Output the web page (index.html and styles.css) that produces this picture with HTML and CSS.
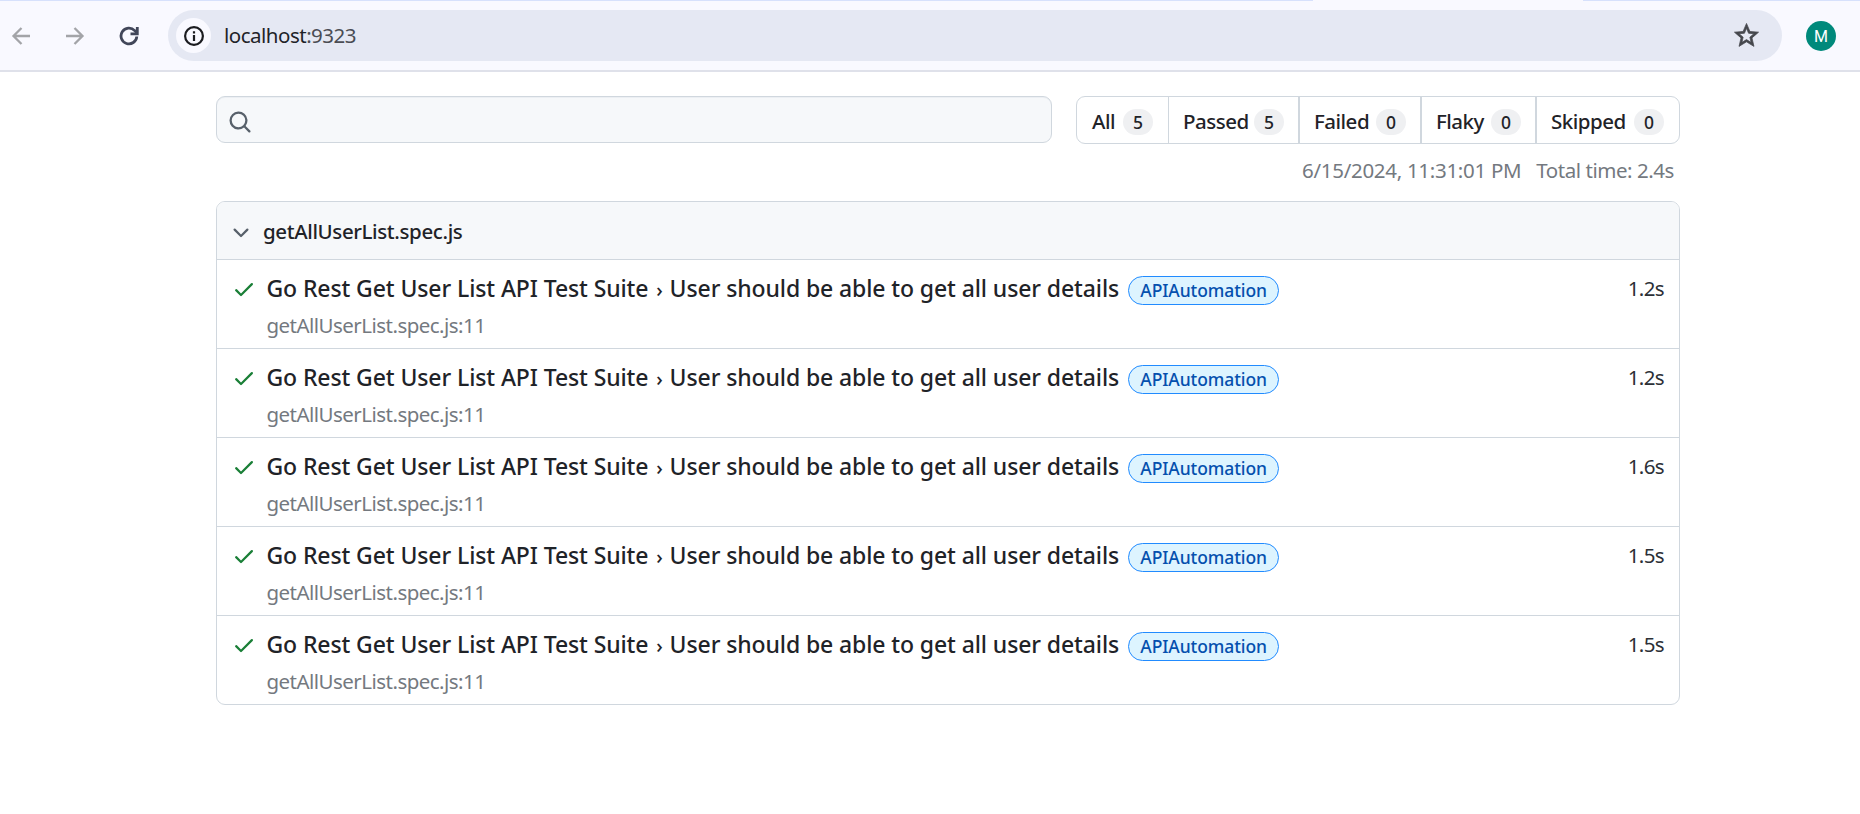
FILE: index.html
```html
<!DOCTYPE html>
<html lang="en">
<head>
<meta charset="utf-8">
<title>Playwright Test Report</title>
<link rel="stylesheet" href="styles.css">
</head>
<body>
<header class="toolbar">
  <svg class="nav back" viewBox="0 0 20 20"><path d="M19 10H3M10.500 2L2.500 10l8 8"/></svg>
  <svg class="nav forward" viewBox="0 0 20 20"><path d="M1 10h16M9.500 2l8 8-8 8"/></svg>
  <svg class="nav reload" viewBox="0 0 20 20"><path d="M17.800 10.500A7.900 7.900 0 1 1 15.700 4.600L17.600 6.500"/><path d="M18.300 1v6.800H11.500"/></svg>
  <div class="omnibox">
    <span class="site"><svg viewBox="0 0 20 20"><circle cx="10" cy="10" r="8.900"/><path d="M10 9v6M10 5.200v2.200"/></svg></span>
    <span class="url">localhost<span class="port">:9323</span></span>
    <svg class="star" viewBox="0 0 24 24"><path d="M22 9.240l-7.190-.62L12 2 9.190 8.630 2 9.240l5.460 4.730L5.820 21 12 17.270 18.180 21l-1.630-7.030L22 9.240zM12 15.400l-3.760 2.270 1-4.280-3.320-2.880 4.380-.38L12 6.100l1.710 4.040 4.380.38-3.320 2.880 1 4.280L12 15.400z"/></svg>
  </div>
  <span class="avatar">M</span>
</header>
<main class="report">
  <div class="filters">
    <div class="search"><svg viewBox="0 0 16 16"><path d="M10.680 11.740a6 6 0 0 1-7.922-8.982 6 6 0 0 1 8.982 7.922l3.040 3.040a.749.749 0 0 1-.326 1.275.749.749 0 0 1-.734-.215ZM11.500 7a4.499 4.499 0 1 0-8.997 0A4.499 4.499 0 0 0 11.500 7Z"/></svg></div>
    <nav class="tabs">
      <a class="tab all"><span class="name">All</span><span class="count">5</span></a>
      <a class="tab passed"><span class="name">Passed</span><span class="count">5</span></a>
      <a class="tab failed"><span class="name">Failed</span><span class="count">0</span></a>
      <a class="tab flaky"><span class="name">Flaky</span><span class="count">0</span></a>
      <a class="tab skipped"><span class="name">Skipped</span><span class="count">0</span></a>
    </nav>
  </div>
  <div class="meta"><span class="date">6/15/2024, 11:31:01 PM</span><span class="total">Total time: 2.4s</span></div>
  <section class="card">
    <div class="card-head"><svg viewBox="0 0 16 16"><path d="M12.780 5.220a.749.749 0 0 1 0 1.060l-4.250 4.250a.749.749 0 0 1-1.060 0L3.220 6.280a.749.749 0 1 1 1.060-1.060L8 8.939l3.720-3.719a.749.749 0 0 1 1.060 0Z"/></svg><span class="file">getAllUserList.spec.js</span></div>
    <div class="row"><svg class="check" viewBox="0 0 16 16"><path d="M13.780 4.220a.75.75 0 0 1 0 1.060l-7.250 7.250a.75.75 0 0 1-1.060 0L2.220 9.280a.751.751 0 0 1 1.060-1.060L6 10.940l6.720-6.720a.75.75 0 0 1 1.060 0Z"/></svg><div class="info"><div class="line"><span class="title">Go Rest Get User List API Test Suite <span class="sep">›</span> User should be able to get all user details</span><span class="label">APIAutomation</span></div><div class="path">getAllUserList.spec.js:11</div></div><span class="time">1.2s</span></div>
    <div class="row"><svg class="check" viewBox="0 0 16 16"><path d="M13.780 4.220a.75.75 0 0 1 0 1.060l-7.250 7.250a.75.75 0 0 1-1.060 0L2.220 9.280a.751.751 0 0 1 1.060-1.060L6 10.940l6.720-6.720a.75.75 0 0 1 1.060 0Z"/></svg><div class="info"><div class="line"><span class="title">Go Rest Get User List API Test Suite <span class="sep">›</span> User should be able to get all user details</span><span class="label">APIAutomation</span></div><div class="path">getAllUserList.spec.js:11</div></div><span class="time">1.2s</span></div>
    <div class="row"><svg class="check" viewBox="0 0 16 16"><path d="M13.780 4.220a.75.75 0 0 1 0 1.060l-7.250 7.250a.75.75 0 0 1-1.060 0L2.220 9.280a.751.751 0 0 1 1.060-1.060L6 10.940l6.720-6.720a.75.75 0 0 1 1.060 0Z"/></svg><div class="info"><div class="line"><span class="title">Go Rest Get User List API Test Suite <span class="sep">›</span> User should be able to get all user details</span><span class="label">APIAutomation</span></div><div class="path">getAllUserList.spec.js:11</div></div><span class="time">1.6s</span></div>
    <div class="row"><svg class="check" viewBox="0 0 16 16"><path d="M13.780 4.220a.75.75 0 0 1 0 1.060l-7.250 7.250a.75.75 0 0 1-1.060 0L2.220 9.280a.751.751 0 0 1 1.060-1.060L6 10.940l6.720-6.720a.75.75 0 0 1 1.060 0Z"/></svg><div class="info"><div class="line"><span class="title">Go Rest Get User List API Test Suite <span class="sep">›</span> User should be able to get all user details</span><span class="label">APIAutomation</span></div><div class="path">getAllUserList.spec.js:11</div></div><span class="time">1.5s</span></div>
    <div class="row"><svg class="check" viewBox="0 0 16 16"><path d="M13.780 4.220a.75.75 0 0 1 0 1.060l-7.250 7.250a.75.75 0 0 1-1.060 0L2.220 9.280a.751.751 0 0 1 1.060-1.060L6 10.940l6.720-6.720a.75.75 0 0 1 1.060 0Z"/></svg><div class="info"><div class="line"><span class="title">Go Rest Get User List API Test Suite <span class="sep">›</span> User should be able to get all user details</span><span class="label">APIAutomation</span></div><div class="path">getAllUserList.spec.js:11</div></div><span class="time">1.5s</span></div>
  </section>
</main>
</body>
</html>
```
FILE: styles.css
```css
* { box-sizing: border-box; }
body { margin: 0; background: #fff; color: #1f2328; font: 20.5px/30px "Noto Sans", "Open Sans", sans-serif; white-space: nowrap; overflow: hidden; }
svg { display: block; flex: none; }

/* The strip above the toolbar is interrupted under the active tab. */
.toolbar { height: 72px; display: flex; align-items: center; background: linear-gradient(90deg, #d7e1fc 1313px, #f9f9ff 1313px 1583px, #d7e1fc 1583px) 0 0 / 100% 1px no-repeat #f9f9ff; border-bottom: 2px solid #dfe1ea; padding: 1px 0 0 11px; }
.nav { width: 20px; height: 20px; fill: none; stroke: #a3a4a8; stroke-width: 2.3; }
.forward { margin-left: 34px; }
.reload { margin-left: 34px; stroke: #414659; stroke-width: 2.8; }
.omnibox { width: 1614px; height: 51px; margin-left: 29px; border-radius: 26px; background: #e5e8f3; display: flex; align-items: center; padding: 0 21px 0 8px; }
.site { width: 35px; height: 35px; border-radius: 50%; background: #f9f9ff; display: flex; align-items: center; justify-content: center; }
.site svg { width: 20px; height: 20px; fill: none; stroke: #1b1c20; stroke-width: 2.2; }
.url { margin: -2px 0 0 13px; letter-spacing: -0.5px; }
.port { color: #4a4c53; }
.star { width: 29px; height: 29px; margin: 0 0 0 auto; fill: #45474c; stroke: #45474c; stroke-width: 0.6; }
.avatar { width: 30px; height: 30px; margin-left: 24px; border-radius: 50%; background: #00897b; color: #fff; font: 16px/31px Roboto, sans-serif; text-align: center; }

.report { width: 1464px; margin: 24px 0 0 216px; }
.filters { display: flex; justify-content: space-between; height: 48px; }
.search { width: 836px; height: 47px; border: 1px solid #d0d7de; border-radius: 9px; background: #f6f8fa; box-shadow: inset 0 1px 0 #eceff3; display: flex; align-items: center; padding: 4px 0 0 11px; }
.search svg { width: 24px; height: 24px; fill: #57606a; }
.tabs { width: 604px; display: flex; border: 1px solid #d0d7de; border-radius: 9px; font-weight: 500; }
.tab { display: flex; align-items: center; justify-content: space-between; padding: 4px 14px 0 14px; border-right: 2px solid #d0d7de; }
.name { margin-top: -3px; letter-spacing: -0.5px; }
.all { width: 92px; border-right-width: 1px; padding: 4px 15px 0 15px; }
.passed { width: 131px; }
.failed { width: 122px; }
.flaky { width: 115px; }
.skipped { width: 142px; border: 0; padding-right: 15px; }
.count { width: 30px; height: 26px; border-radius: 13px; background: #eff0f2; font-size: 17.5px; line-height: 26px; text-align: center; }

.meta { display: flex; justify-content: flex-end; gap: 15px; padding-right: 6px; height: 57px; line-height: 52px; color: #74797f; letter-spacing: -0.3px; }
.total { letter-spacing: -0.45px; }
.card { border: 1px solid #d0d7de; border-radius: 9px; overflow: hidden; }
.card-head { height: 57px; background: #f6f8fa; display: flex; align-items: center; padding: 2px 0 0 12px; }
.card-head svg { width: 24px; height: 24px; fill: #57606a; margin-top: 3px; }
.file { margin: -2px 0 0 10px; font-weight: 500; letter-spacing: -0.38px; }
.row { height: 89px; border-top: 1px solid #d0d7de; display: flex; padding: 13px 15px 0 15px; }
.check { width: 24px; height: 24px; fill: #1a7f37; margin-top: 4px; }
.info { flex: 1; padding-left: 10.5px; }
.line { display: flex; align-items: center; height: 30px; }
.title { font-size: 23px; font-weight: 500; letter-spacing: -0.105px; }
.sep { font-size: 20px; line-height: 1; margin: 0 1px 0 2px; }
.label { height: 29px; width: 151px; margin: 4px 0 0 9px; border: 1px solid #218bff; border-radius: 15px; background: #ddf4ff; color: #0550ae; font-size: 17.5px; font-weight: 500; line-height: 26px; letter-spacing: -0.1px; text-align: center; }
.path { margin-top: 7px; color: #74797f; letter-spacing: -0.53px; }
.time { color: #2c3036; letter-spacing: -0.6px; }
```
